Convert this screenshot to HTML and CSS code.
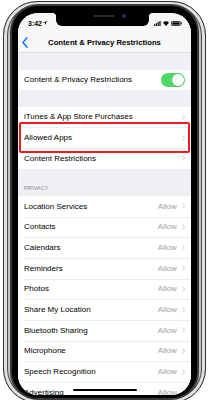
FILE: index.html
```html
<!DOCTYPE html>
<html>
<head>
<meta charset="utf-8">
<link rel="stylesheet" href="styles.css">
</head>
<body>
<div class="phone">
  <div class="rim">
    <div class="screen">
      <div class="notch"><span class="speaker"></span><span class="camera"></span></div>
      <div class="status">
        <div class="time">3:42<svg class="loc" width="4" height="4" viewBox="0 0 4 4"><path d="M4 0 L0 1.7 L2 2 L2.3 4 Z" fill="#000"/></svg></div>
        <div class="status-icons">
          <svg width="7" height="5" viewBox="0 0 7 5"><rect x="0" y="3.2" width="1.2" height="1.8" fill="#000"/><rect x="1.8" y="2.2" width="1.2" height="2.8" fill="#000"/><rect x="3.6" y="1.1" width="1.2" height="3.9" fill="#000"/><rect x="5.4" y="0" width="1.2" height="5" fill="#000"/></svg>
          <svg width="6" height="5" viewBox="0 0 6 5"><path d="M3 5 L0 1.6 A4.4 4.4 0 0 1 6 1.6 Z" fill="#000"/></svg>
          <svg width="11" height="5" viewBox="0 0 11 5"><rect x="0.4" y="0.4" width="9" height="4.2" rx="1" fill="none" stroke="#000" stroke-width="0.8"/><rect x="1.3" y="1.3" width="7.2" height="2.4" fill="#000"/><rect x="9.9" y="1.6" width="0.9" height="1.8" fill="#000"/></svg>
        </div>
      </div>
      <div class="nav">
        <svg class="back" width="6" height="11" viewBox="0 0 6 11"><path d="M5 0.8 L1 5.5 L5 10.2" fill="none" stroke="#007aff" stroke-width="1.4" stroke-linecap="round" stroke-linejoin="round"/></svg>
        <div class="title">Content &amp; Privacy Restrictions</div>
        <div></div>
      </div>
      <div class="gap"></div>
      <div class="group">
        <div class="row"><span class="label">Content &amp; Privacy Restrictions</span><span class="toggle"><span class="knob"></span></span></div>
      </div>
      <div class="gap"></div>
      <div class="group">
        <div class="row"><span class="label">iTunes &amp; App Store Purchases</span><svg class="chev" width="3" height="6" viewBox="0 0 3 6"><path d="M0.4 0.4 L2.6 3 L0.4 5.6" fill="none" stroke="#c4c4c9" stroke-width="0.8"/></svg></div>
        <div class="row"><span class="label">Allowed Apps</span><svg class="chev" width="3" height="6" viewBox="0 0 3 6"><path d="M0.4 0.4 L2.6 3 L0.4 5.6" fill="none" stroke="#c4c4c9" stroke-width="0.8"/></svg><span class="highlight"></span></div>
        <div class="row"><span class="label">Content Restrictions</span><svg class="chev" width="3" height="6" viewBox="0 0 3 6"><path d="M0.4 0.4 L2.6 3 L0.4 5.6" fill="none" stroke="#c4c4c9" stroke-width="0.8"/></svg></div>
      </div>
      <div class="section-header">PRIVACY</div>
      <div class="group">
        <div class="row"><span class="label">Location Services</span><span class="value">Allow</span><svg class="chev" width="3" height="6" viewBox="0 0 3 6"><path d="M0.4 0.4 L2.6 3 L0.4 5.6" fill="none" stroke="#c4c4c9" stroke-width="0.8"/></svg></div>
        <div class="row"><span class="label">Contacts</span><span class="value">Allow</span><svg class="chev" width="3" height="6" viewBox="0 0 3 6"><path d="M0.4 0.4 L2.6 3 L0.4 5.6" fill="none" stroke="#c4c4c9" stroke-width="0.8"/></svg></div>
        <div class="row"><span class="label">Calendars</span><span class="value">Allow</span><svg class="chev" width="3" height="6" viewBox="0 0 3 6"><path d="M0.4 0.4 L2.6 3 L0.4 5.6" fill="none" stroke="#c4c4c9" stroke-width="0.8"/></svg></div>
        <div class="row"><span class="label">Reminders</span><span class="value">Allow</span><svg class="chev" width="3" height="6" viewBox="0 0 3 6"><path d="M0.4 0.4 L2.6 3 L0.4 5.6" fill="none" stroke="#c4c4c9" stroke-width="0.8"/></svg></div>
        <div class="row"><span class="label">Photos</span><span class="value">Allow</span><svg class="chev" width="3" height="6" viewBox="0 0 3 6"><path d="M0.4 0.4 L2.6 3 L0.4 5.6" fill="none" stroke="#c4c4c9" stroke-width="0.8"/></svg></div>
        <div class="row"><span class="label">Share My Location</span><span class="value">Allow</span><svg class="chev" width="3" height="6" viewBox="0 0 3 6"><path d="M0.4 0.4 L2.6 3 L0.4 5.6" fill="none" stroke="#c4c4c9" stroke-width="0.8"/></svg></div>
        <div class="row"><span class="label">Bluetooth Sharing</span><span class="value">Allow</span><svg class="chev" width="3" height="6" viewBox="0 0 3 6"><path d="M0.4 0.4 L2.6 3 L0.4 5.6" fill="none" stroke="#c4c4c9" stroke-width="0.8"/></svg></div>
        <div class="row"><span class="label">Microphone</span><span class="value">Allow</span><svg class="chev" width="3" height="6" viewBox="0 0 3 6"><path d="M0.4 0.4 L2.6 3 L0.4 5.6" fill="none" stroke="#c4c4c9" stroke-width="0.8"/></svg></div>
        <div class="row"><span class="label">Speech Recognition</span><span class="value">Allow</span><svg class="chev" width="3" height="6" viewBox="0 0 3 6"><path d="M0.4 0.4 L2.6 3 L0.4 5.6" fill="none" stroke="#c4c4c9" stroke-width="0.8"/></svg></div>
        <div class="row"><span class="label">Advertising</span><span class="value">Allow</span><svg class="chev" width="3" height="6" viewBox="0 0 3 6"><path d="M0.4 0.4 L2.6 3 L0.4 5.6" fill="none" stroke="#c4c4c9" stroke-width="0.8"/></svg></div>
      </div>
      <div class="home-indicator"></div>
    </div>
  </div>
</div>
</body>
</html>
```
FILE: styles.css
```css
* { box-sizing: border-box; margin: 0; padding: 0; }
html, body { background: #fff; }
body {
  width: 210px;
  height: 400px;
  overflow: hidden;
  font-family: "Liberation Sans", Arial, sans-serif;
}
.phone {
  margin: 1px 0 0 3px;
  width: 203px;
  height: 402px;
  border: 1px solid #333;
  border-radius: 34px;
  background: #c2c2c2;
  padding: 2px 6px;
  box-shadow: inset 0 0 0 3px #e2e2e2, inset 0 0 0 4px #4a4a4a;
}
.rim {
  height: 100%;
  border: 2px solid #3a3a3a;
  border-radius: 28px;
  background: #000;
  padding: 7px 6px 3px 6px;
}
.screen {
  position: relative;
  height: 100%;
  background: #efeff4;
  border-radius: 20px;
  overflow: hidden;
  display: flex;
  flex-direction: column;
}
.notch {
  position: absolute;
  top: 0;
  left: 38px;
  width: 93px;
  height: 13px;
  background: #000;
  border-radius: 0 0 6px 6px;
  z-index: 3;
}
.notch::before, .notch::after {
  content: "";
  position: absolute;
  top: 0;
  width: 4px;
  height: 4px;
}
.notch::before { left: -4px; background: radial-gradient(circle at 0 100%, transparent 4px, #000 4.5px); }
.notch::after { right: -4px; background: radial-gradient(circle at 100% 100%, transparent 4px, #000 4.5px); }
.speaker {
  position: absolute;
  left: 37px;
  top: 2px;
  width: 22px;
  height: 2px;
  border-radius: 1px;
  background: #2a2a2a;
}
.camera {
  position: absolute;
  left: 66px;
  top: 1px;
  width: 4px;
  height: 4px;
  border-radius: 50%;
  background: #1d2d4d;
}
.status {
  height: 20px;
  background: #f7f7f7;
  display: flex;
  align-items: center;
  justify-content: space-between;
  padding: 1px 9px 0 10px;
  flex-shrink: 0;
}
.time {
  font-size: 7px;
  font-weight: bold;
  color: #000;
  display: flex;
  align-items: center;
  gap: 1px;
}
.loc { margin-top: -1px; }
.status-icons {
  display: flex;
  align-items: center;
  gap: 2px;
}
.nav {
  height: 20px;
  background: #f7f7f7;
  border-bottom: 1px solid #dcdce0;
  display: grid;
  grid-template-columns: 1fr auto 1fr;
  align-items: center;
  flex-shrink: 0;
}
.back { margin-left: 4px; }
.title {
  font-size: 7.7px;
  font-weight: bold;
  color: #000;
  white-space: nowrap;
}
.gap { height: 16.5px; flex-shrink: 0; }
.group {
  background: #fff;
  flex-shrink: 0;
}
.row {
  position: relative;
  height: 20.67px;
  display: flex;
  align-items: center;
  padding: 0 5.7px 0 6px;
  font-size: 8px;
  color: #000;
}
.row + .row::before {
  content: "";
  position: absolute;
  top: 0;
  left: 6px;
  right: 0;
  height: 1px;
  background: #ececf0;
}
.label { flex: 1; white-space: nowrap; }
.value { color: #a2a2a7; margin-right: 5.5px; }
.chev { flex-shrink: 0; }
.toggle {
  position: relative;
  width: 24px;
  height: 14px;
  border-radius: 7px;
  background: #4cd964;
  margin-right: 0.3px;
}
.knob {
  position: absolute;
  right: 1px;
  top: 1px;
  width: 12px;
  height: 12px;
  border-radius: 50%;
  background: #fff;
  box-shadow: 0 0.5px 1px rgba(0,0,0,0.25);
}
.highlight {
  position: absolute;
  top: -5px;
  bottom: -5px;
  left: 1px;
  right: 1px;
  border: 2px solid #ec1c1c;
  border-radius: 2px;
  z-index: 2;
}
.section-header {
  height: 27.33px;
  display: flex;
  align-items: flex-end;
  padding: 0 6px 5px;
  font-size: 5.7px;
  color: #8a8a8f;
  flex-shrink: 0;
}
.home-indicator {
  position: absolute;
  bottom: 4px;
  left: 55px;
  width: 64px;
  height: 2.5px;
  border-radius: 2px;
  background: #000;
}
```
